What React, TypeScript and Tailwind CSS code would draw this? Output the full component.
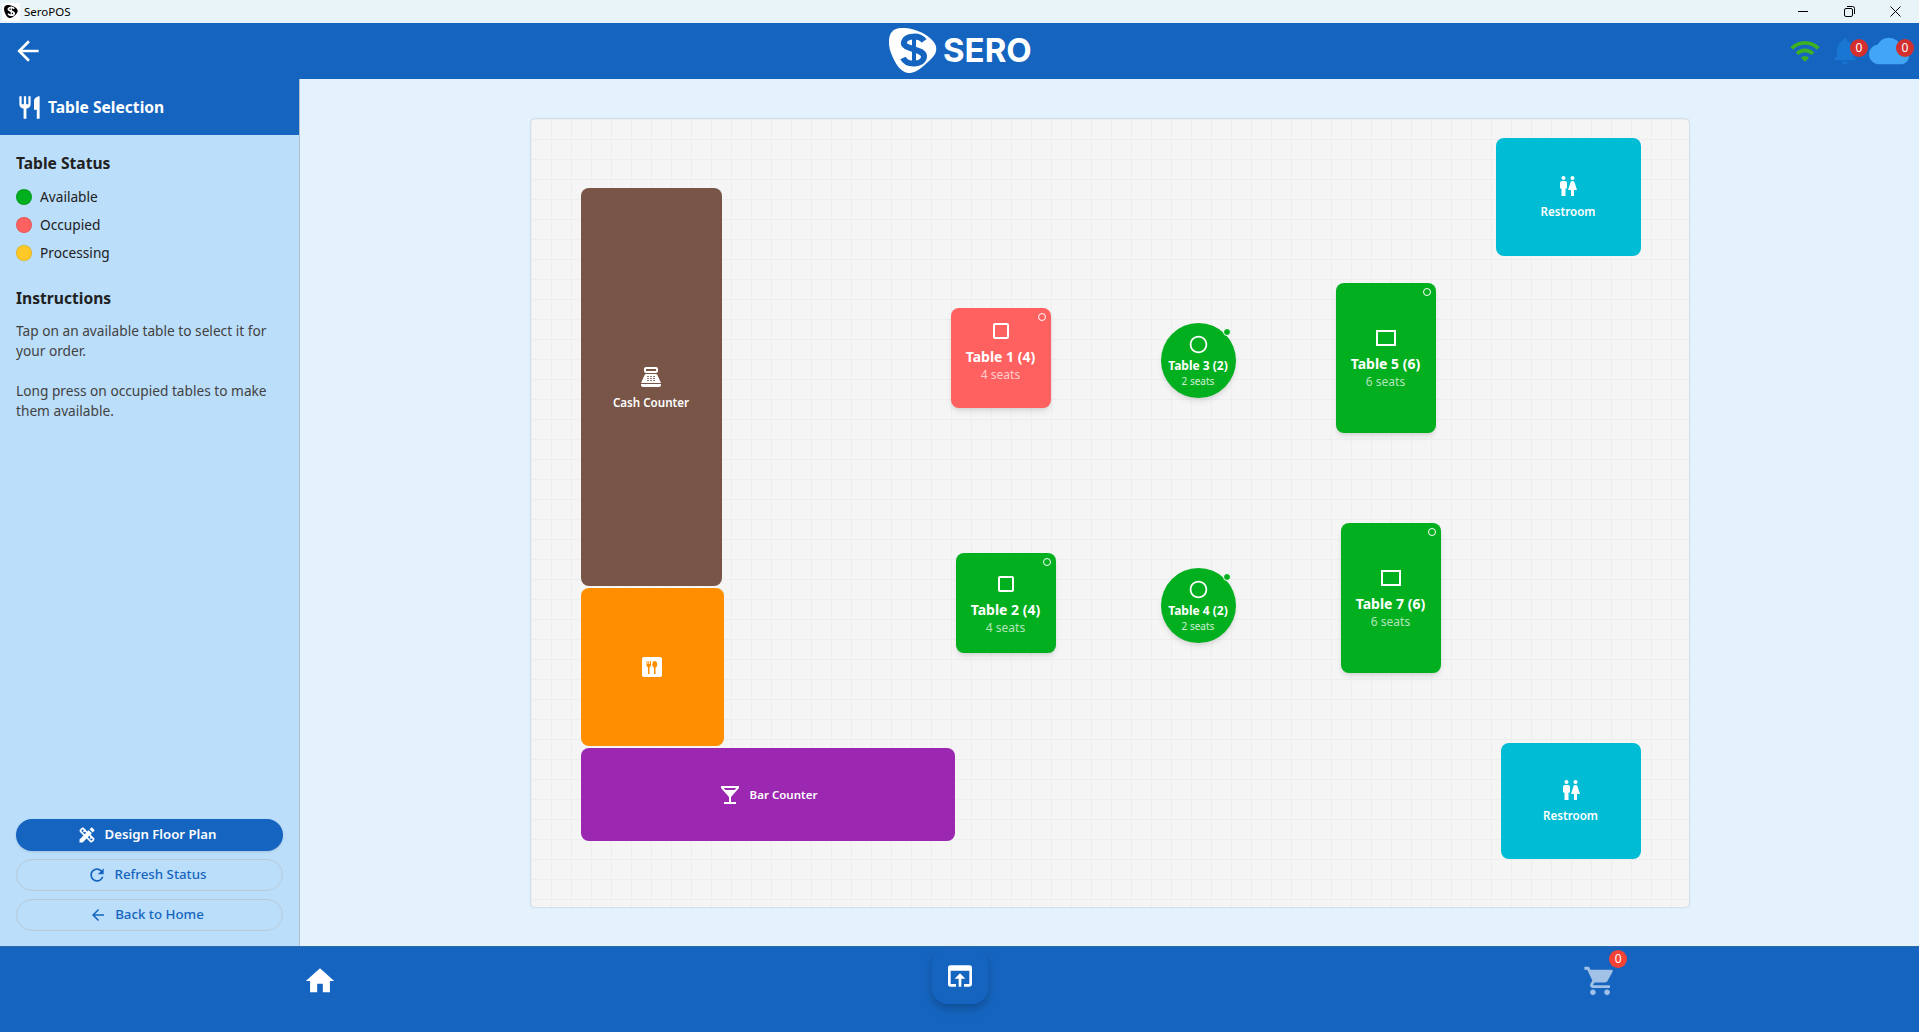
import type { ReactNode } from "react";
import {
  MdArrowBack,
  MdCloud,
  MdCropSquare,
  MdDesignServices,
  MdDining,
  MdHome,
  MdLocalBar,
  MdNotifications,
  MdOpenInBrowser,
  MdOutlineRectangle,
  MdPanoramaFishEye,
  MdPointOfSale,
  MdRefresh,
  MdRestaurant,
  MdShoppingCart,
  MdWc,
  MdWifi,
} from "react-icons/md";

const LogoMark = (props: { className: string; bg: string; fg: string }) => (
  <svg viewBox="0 0 48 45" className={props.className}>
    <path
      d="M11 0C23 -1 37 5 44 13C49 19 48 25 43 30C36 37 27 46 19 45C11 44 6 35 2 25C-2 14 -1 1 11 0Z"
      fill={props.bg}
    />
    <path
      d="M35 13C31 7 17 7 15 14C13 22 36 20 35 29C34 37 18 38 14 30"
      fill="none"
      stroke={props.fg}
      strokeWidth="6"
    />
    <path d="M25 6V38" stroke={props.fg} strokeWidth="4" />
  </svg>
);

const TitleBar = () => (
  <div className="h-[23px] flex items-center bg-[#e9f4f8] text-black">
    <div className="w-[18px] h-[18px] ml-0.5 bg-white flex items-center justify-center">
      <LogoMark className="w-[14px] h-[13px]" bg="#000" fg="#fff" />
    </div>
    <span className="ml-[4px] text-[11.5px]">SeroPOS</span>
    <div className="ml-auto mr-px flex items-center">
      <button className="w-[46px] h-[23px] flex items-center justify-center">
        <span className="block w-[10px] h-px bg-black" />
      </button>
      <button className="w-[46px] h-[23px] flex items-center justify-center">
        <svg width="11" height="11" viewBox="0 0 11 11" fill="none" stroke="#000">
          <rect x="0.5" y="2.5" width="8" height="8" rx="1.5" />
          <path d="M3 .5H8.5A2 2 0 0 1 10.5 2.5V8" />
        </svg>
      </button>
      <button className="w-[46px] h-[23px] flex items-center justify-center">
        <svg width="11" height="11" viewBox="0 0 11 11" stroke="#000">
          <path d="M.5 .5L10.5 10.5M10.5 .5L.5 10.5" />
        </svg>
      </button>
    </div>
  </div>
);

const CountBadge = (props: { className: string; count: number }) => (
  <span
    className={`absolute w-[18px] h-[18px] rounded-full flex items-center justify-center text-white text-[12px] leading-none ${props.className}`}
  >
    {props.count}
  </span>
);

const Header = () => (
  <header className="relative h-14 flex items-center justify-between bg-[#1565c0] text-white">
    <button className="ml-3">
      <MdArrowBack size={32} />
    </button>
    <div className="absolute left-[889px] top-[5px] flex items-center">
      <LogoMark className="w-12 h-[45px]" bg="#fff" fg="#1565c0" />
      <span className="ml-1.5 font-['Inter'] font-bold text-[33px] leading-none">
        SERO
      </span>
    </div>
    <div className="flex items-center mr-[10px]">
      <MdWifi size={32} className="text-[#3fb01f]" />
      <div className="relative ml-[8px] w-8 h-8">
        <MdNotifications size={32} className="text-[#1976d2]" />
        <CountBadge className="top-[4px] -right-[7px] bg-[#d32f2f]" count={0} />
      </div>
      <div className="relative ml-[8px] w-[40px] h-8">
        <MdCloud size={40} className="-mt-1 text-[#42a5f5]" />
        <CountBadge className="top-[4px] -right-[5px] bg-[#d32f2f]" count={0} />
      </div>
    </div>
  </header>
);

const StatusRow = (props: { color: string; label: string }) => (
  <div className="h-7 flex items-center text-[13.7px] text-[#212121]">
    <span className={`w-4 h-4 rounded-full border border-black/10 ${props.color}`} />
    <span className="ml-[8px]">{props.label}</span>
  </div>
);

const SideButton = (props: { icon: ReactNode; label: string; primary?: boolean }) => (
  <button
    className={
      props.primary
        ? "h-8 pr-[6px] flex items-center justify-center gap-2 rounded-full bg-[#1565c0] text-white text-[13.2px] font-semibold shadow-sm"
        : "h-8 pr-[6px] flex items-center justify-center gap-2 rounded-full border border-[#b8c9d8] text-[#1565c0] text-[13.3px] font-medium"
    }
  >
    {props.icon}
    {props.label}
  </button>
);

const Sidebar = () => (
  <aside className="w-[300px] shrink-0 flex flex-col bg-[#bbdefb] border-r border-[#b4bec6]">
    <div className="h-14 flex items-center px-4 bg-[#1565c0] text-white">
      <MdRestaurant size={27} />
      <span className="ml-[5px] pt-px text-[15.6px] font-bold">Table Selection</span>
    </div>
    <div className="px-4 pt-[18px]">
      <h3 className="text-[15.6px] leading-[20px] font-bold text-[#212121]">Table Status</h3>
      <div className="mt-[10px]">
        <StatusRow color="bg-[#02af1f]" label="Available" />
        <StatusRow color="bg-[#ff6161]" label="Occupied" />
        <StatusRow color="bg-[#ffca28]" label="Processing" />
      </div>
      <h3 className="mt-[21px] text-[15.6px] leading-[20px] font-bold text-[#212121]">Instructions</h3>
      <p className="mt-[13px] text-[13.7px] leading-5 text-[#424242]">
        Tap on an available table to select it for your order.
      </p>
      <p className="mt-5 text-[13.7px] leading-5 text-[#424242]">
        Long press on occupied tables to make them available.
      </p>
    </div>
    <div className="mt-auto px-4 pb-[15px] flex flex-col gap-2">
      <SideButton primary icon={<MdDesignServices size={20} />} label="Design Floor Plan" />
      <SideButton icon={<MdRefresh size={20} />} label="Refresh Status" />
      <SideButton icon={<MdArrowBack size={18} />} label="Back to Home" />
    </div>
  </aside>
);

const tables = [
  { id: 1, name: "Table 1 (4)", seats: "4 seats", pos: "left-[420px] top-[189px] w-[100px] h-[100px] pt-[11px] rounded-lg bg-[#ff6161]", shape: "square" },
  { id: 2, name: "Table 2 (4)", seats: "4 seats", pos: "left-[425px] top-[434px] w-[100px] h-[100px] pt-[19px] rounded-lg bg-[#02af1f]", shape: "square" },
  { id: 3, name: "Table 3 (2)", seats: "2 seats", pos: "left-[630px] top-[204px] w-[75px] h-[75px] pt-[11px] rounded-full bg-[#02af1f]", shape: "round" },
  { id: 4, name: "Table 4 (2)", seats: "2 seats", pos: "left-[630px] top-[449px] w-[75px] h-[75px] pt-[11px] rounded-full bg-[#02af1f]", shape: "round" },
  { id: 5, name: "Table 5 (6)", seats: "6 seats", pos: "left-[805px] top-[164px] w-[100px] h-[150px] pt-[43px] rounded-lg bg-[#02af1f]", shape: "rect" },
  { id: 7, name: "Table 7 (6)", seats: "6 seats", pos: "left-[810px] top-[404px] w-[100px] h-[150px] pt-[43px] rounded-lg bg-[#02af1f]", shape: "rect" },
];

const TableNode = (props: { table: (typeof tables)[number] }) => {
  const { table } = props;
  const round = table.shape === "round";
  return (
    <div className={`absolute flex flex-col items-center text-white shadow-md ${table.pos}`}>
      {table.shape === "square" && <MdCropSquare size={24} />}
      {table.shape === "rect" && <MdOutlineRectangle size={24} />}
      {round && <MdPanoramaFishEye size={21} />}
      <span className={round ? "mt-[3px] text-[12px] leading-4 font-bold" : "mt-[5px] text-[14px] leading-[18px] font-bold"}>
        {table.name}
      </span>
      <span className={round ? "text-[10px] leading-[14px] text-white/80" : "mt-px text-[12px] leading-4 text-white/70"}>
        {table.seats}
      </span>
      <span className="absolute right-[5px] top-[5px] w-[8px] h-[8px] rounded-full border border-white bg-inherit" />
    </div>
  );
};

const FloorCanvas = () => (
  <div className="relative w-[1158px] h-[788px] rounded bg-[#f5f5f5] bg-[linear-gradient(#eeeeee_1px,transparent_1px),linear-gradient(90deg,#eeeeee_1px,transparent_1px)] bg-[size:20px_20px] shadow-[0_0_2px_rgba(60,90,130,0.4)]">
    <div className="absolute left-[50px] top-[69px] w-[141px] h-[398px] pt-[2px] rounded-lg bg-[#795548] text-white flex flex-col items-center justify-center">
      <MdPointOfSale size={24} />
      <span className="mt-[6px] text-[11.6px] leading-4 font-semibold">Cash Counter</span>
    </div>
    <div className="absolute left-[50px] top-[469px] w-[143px] h-[158px] rounded-lg bg-[#ff8f00] text-white flex items-center justify-center">
      <MdDining size={24} />
    </div>
    <div className="absolute left-[50px] top-[629px] w-[374px] h-[93px] pt-[2px] rounded-lg bg-[#9c27b0] text-white flex items-center justify-center gap-2">
      <MdLocalBar size={24} />
      <span className="text-[11.5px] font-semibold">Bar Counter</span>
    </div>
    <div className="absolute left-[965px] top-[19px] w-[145px] h-[118px] rounded-lg bg-[#00bcd4] text-white flex flex-col items-center justify-center">
      <MdWc size={24} />
      <span className="mt-[6px] text-[11.6px] leading-4 font-semibold">Restroom</span>
    </div>
    <div className="absolute left-[970px] top-[624px] w-[140px] h-[116px] rounded-lg bg-[#00bcd4] text-white flex flex-col items-center justify-center">
      <MdWc size={24} />
      <span className="mt-[6px] text-[11.6px] leading-4 font-semibold">Restroom</span>
    </div>
    {tables.map((table) => (
      <TableNode key={table.id} table={table} />
    ))}
  </div>
);

const BottomBar = () => (
  <nav className="h-[86px] shrink-0 grid grid-cols-3 bg-[#1565c0] border-t border-[#2f6aa8]">
    <div className="flex justify-center pt-[17px]">
      <MdHome size={34} className="text-white" />
    </div>
    <div className="flex justify-center pt-[1px] pl-[2px]">
      <button className="w-14 h-14 rounded-2xl bg-[#1565c0] flex items-center justify-center shadow-[0_5px_10px_rgba(0,0,0,0.22)]">
        <MdOpenInBrowser size={32} className="text-white" />
      </button>
    </div>
    <div className="flex justify-center pt-[17px]">
      <div className="relative w-8 h-8">
        <MdShoppingCart size={34} className="text-white/60" />
        <CountBadge className="-top-[14px] -right-[12px] bg-[#f44336]" count={0} />
      </div>
    </div>
  </nav>
);

export default function App() {
  return (
    <div className="w-[1919px] h-[1032px] flex flex-col overflow-hidden font-['Noto_Sans',sans-serif]">
      <TitleBar />
      <Header />
      <div className="flex-1 flex min-h-0">
        <Sidebar />
        <main className="flex-1 flex items-center justify-center bg-[#e3f2fd]">
          <FloorCanvas />
        </main>
      </div>
      <BottomBar />
    </div>
  );
}
